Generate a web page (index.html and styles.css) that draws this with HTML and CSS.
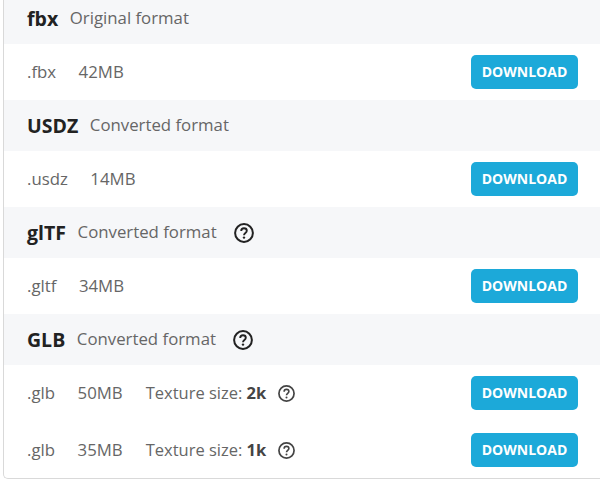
FILE: index.html
```html
<!DOCTYPE html>
<html lang="en">
<head>
<meta charset="utf-8">
<title>Downloads</title>
<link rel="stylesheet" href="styles.css">
</head>
<body>
<svg class="defs" width="0" height="0" aria-hidden="true">
  <symbol id="help" viewBox="0 0 20 20">
    <circle cx="10" cy="10" r="8.9" fill="none" stroke="currentColor" stroke-width="2"/>
    <path d="M7.2 7.9C7.2 6.3 8.4 5.2 10 5.2s2.8 1 2.8 2.5c0 2.3-2.8 2.2-2.8 4.5" fill="none" stroke="currentColor" stroke-width="1.9"/>
    <circle cx="10" cy="14.6" r="1.2" fill="currentColor"/>
  </symbol>
</svg>
<main class="card">
  <section>
    <h3 class="head"><b class="name">fbx</b><span class="kind">Original format</span></h3>
    <div class="row"><span class="ext">.fbx</span><span class="size">42MB</span><a class="btn">DOWNLOAD</a></div>
  </section>
  <section>
    <h3 class="head"><b class="name">USDZ</b><span class="kind">Converted format</span></h3>
    <div class="row"><span class="ext">.usdz</span><span class="size">14MB</span><a class="btn">DOWNLOAD</a></div>
  </section>
  <section>
    <h3 class="head"><b class="name">glTF</b><span class="kind">Converted format</span><svg class="q q-big"><use href="#help"/></svg></h3>
    <div class="row"><span class="ext">.gltf</span><span class="size">34MB</span><a class="btn">DOWNLOAD</a></div>
  </section>
  <section>
    <h3 class="head"><b class="name">GLB</b><span class="kind">Converted format</span><svg class="q q-big"><use href="#help"/></svg></h3>
    <div class="row"><span class="ext">.glb</span><span class="size">50MB</span><span class="tex">Texture size: <b>2k</b></span><svg class="q q-small"><use href="#help"/></svg><a class="btn">DOWNLOAD</a></div>
    <div class="row"><span class="ext">.glb</span><span class="size">35MB</span><span class="tex">Texture size: <b>1k</b></span><svg class="q q-small"><use href="#help"/></svg><a class="btn">DOWNLOAD</a></div>
  </section>
</main>
</body>
</html>
```
FILE: styles.css
```css
* { box-sizing: border-box; }
html, body { margin: 0; height: 485px; overflow: hidden; background: #fff; }
body { font-family: "Open Sans", sans-serif; color: #666; font-size: 16.8px; }
.defs { position: absolute; }
.card {
  margin: -7px 0 0 3px;
  width: 597px;
  border-left: 1px solid #d9d9d9;
  border-bottom: 1px solid #d9d9d9;
  border-bottom-left-radius: 5px;
}
.head {
  display: flex;
  align-items: center;
  height: 51px;
  margin: 0;
  padding-left: 23px;
  background: #f6f7f9;
  font-weight: 400;
  font-size: 16.8px;
}
.name { font-size: 19.5px; font-weight: 700; color: #222; margin-right: 11.6px; }
.kind { color: #666; margin-bottom: 2px; }
.row {
  display: flex;
  align-items: center;
  height: 56px;
  padding: 0 22px 0 23px;
}
.row + .row { margin-top: 1px; }
.ext { margin: 0 22.5px 2px 0; }
.size { margin: 0 23px 2px 0; }
.tex { font-size: 16.5px; margin-bottom: 2px; }
.tex b { color: #444; }
.q { display: block; }
.q-big { width: 20px; height: 20px; color: #222; margin-left: 17px; }
.q-small { width: 17px; height: 17px; color: #444; margin-left: 11.5px; }
.btn {
  margin-left: auto;
  width: 107px;
  height: 34px;
  line-height: 34px;
  text-align: center;
  background: #1ca9d9;
  color: #fff;
  border-radius: 5px;
  font-weight: 700;
  font-size: 14px;
}
```
